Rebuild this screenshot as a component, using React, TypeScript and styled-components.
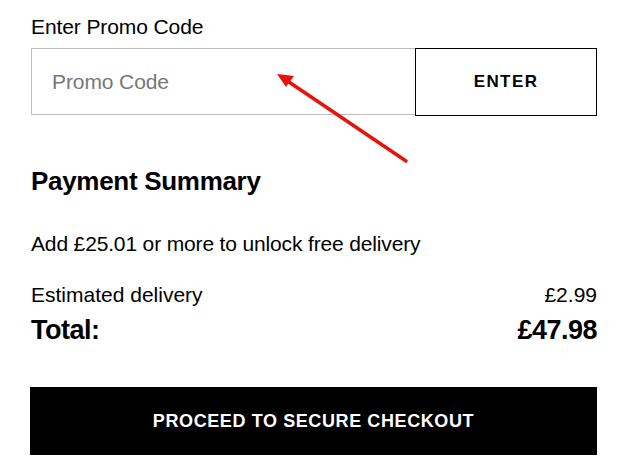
import React from 'react';
import styled, { createGlobalStyle } from 'styled-components';

const GlobalStyle = createGlobalStyle`
  body {
    margin: 0;
    background: #fff;
    font-family: "Liberation Sans", Arial, sans-serif;
    color: #000;
  }
`;

const Page = styled.div`
  position: relative;
  width: 642px;
  height: 472px;
  overflow: hidden;
  padding: 14px 45px 0 31px;
  box-sizing: border-box;
`;

const Label = styled.div`
  font-size: 21px;
  line-height: 25px;
  letter-spacing: -0.1px;
  margin-bottom: 9px;
`;

const PromoRow = styled.div`
  display: flex;
  height: 68px;
`;

const PromoInput = styled.input`
  flex: 1;
  height: 67px;
  box-sizing: border-box;
  border: 1px solid #bcbcbc;
  border-right: none;
  padding: 0 20px;
  font-family: inherit;
  font-size: 21px;
  letter-spacing: -0.1px;
  outline: none;
  &::placeholder {
    color: #777;
  }
`;

const EnterButton = styled.button`
  width: 182px;
  height: 68px;
  background: #fff;
  border: 1px solid #000;
  font-family: inherit;
  font-size: 17px;
  font-weight: 700;
  letter-spacing: 1.4px;
  color: #000;
`;

const Heading = styled.h2`
  font-size: 26px;
  font-weight: 700;
  letter-spacing: -0.3px;
  margin: 50px 0 0;
  line-height: 30px;
`;

const Notice = styled.p`
  font-size: 21px;
  letter-spacing: -0.15px;
  margin: 36px 0 0;
  line-height: 24px;
`;

const Row = styled.div<{ $total?: boolean }>`
  display: flex;
  justify-content: space-between;
  align-items: baseline;
  font-size: ${(p) => (p.$total ? '27px' : '21px')};
  font-weight: ${(p) => (p.$total ? 700 : 400)};
  letter-spacing: ${(p) => (p.$total ? '-0.5px' : '0')};
  line-height: ${(p) => (p.$total ? '30px' : '24px')};
  margin-top: ${(p) => (p.$total ? '8px' : '27px')};
`;

const CheckoutButton = styled.button`
  display: block;
  width: 567px;
  height: 68px;
  margin: 42px 0 0 -1px;
  background: #000;
  color: #fff;
  border: none;
  font-family: inherit;
  font-size: 18px;
  font-weight: 700;
  letter-spacing: 0.6px;
`;

const Arrow = styled.svg`
  position: absolute;
  left: 0;
  top: 0;
  pointer-events: none;
`;

const App: React.FC = () => {
  return (
    <>
      <GlobalStyle />
      <Page>
        <Label>Enter Promo Code</Label>
        <PromoRow>
          <PromoInput placeholder="Promo Code" />
          <EnterButton>ENTER</EnterButton>
        </PromoRow>
        <Heading>Payment Summary</Heading>
        <Notice>Add £25.01 or more to unlock free delivery</Notice>
        <Row>
          <span>Estimated delivery</span>
          <span>£2.99</span>
        </Row>
        <Row $total>
          <span>Total:</span>
          <span>£47.98</span>
        </Row>
        <CheckoutButton>PROCEED TO SECURE CHECKOUT</CheckoutButton>
        <Arrow width="642" height="472" viewBox="0 0 642 472">
          <line x1="406" y1="161" x2="286" y2="80" stroke="#e8120c" strokeWidth="3.5" strokeLinecap="round" />
          <polygon points="277,74 294,76 286,87" fill="#e8120c" />
        </Arrow>
      </Page>
    </>
  );
};

export default App;
